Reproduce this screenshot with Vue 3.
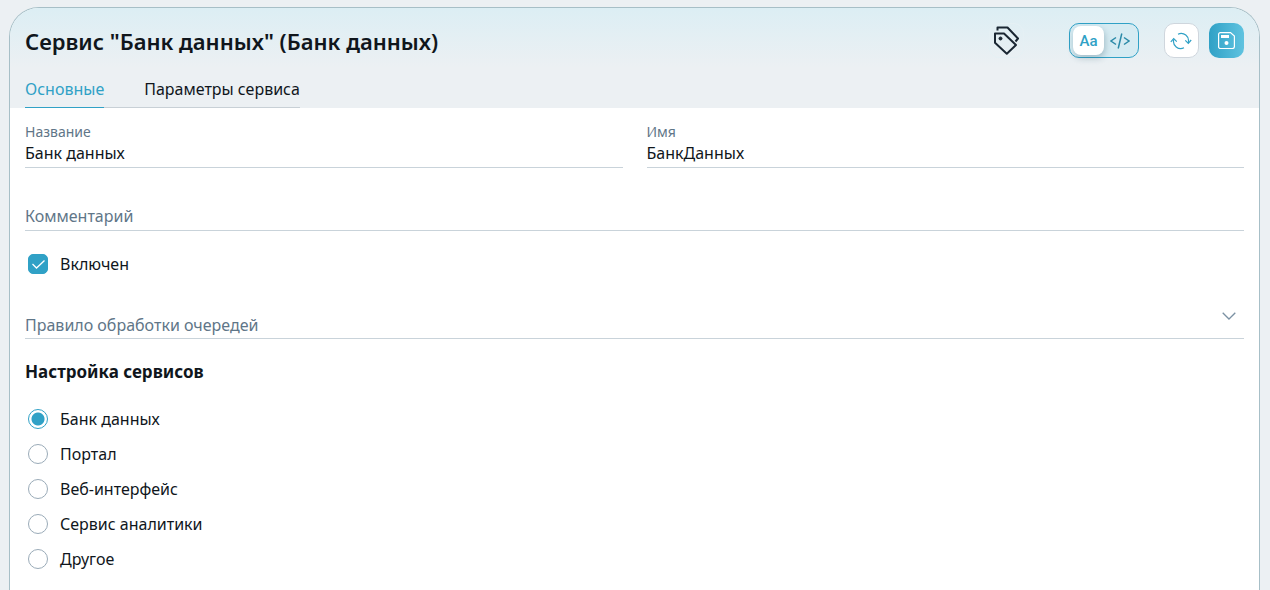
<script setup>
import { ref } from 'vue'

const tabs = ['Основные', 'Параметры сервиса']
const activeTab = ref(tabs[0])
const title = ref('Банк данных')
const name = ref('БанкДанных')
const comment = ref('')
const enabled = ref(true)
const rule = ref('')
const view = ref('text')
const services = ['Банк данных', 'Портал', 'Веб-интерфейс', 'Сервис аналитики', 'Другое']
const service = ref(services[0])
</script>

<template>
  <main class="card">
    <header class="head">
      <div class="bar">
        <h1 class="title">Сервис "Банк данных" (Банк данных)</h1>
        <button class="icon-btn tags" type="button" aria-label="Метки">
          <svg width="35" height="35" viewBox="0 0 35 35" fill="none" stroke="#1b2733" stroke-width="2">
            <path d="M6 10.5h9L27 22 17.800 30.800 6 19.800z" stroke-linejoin="round" />
            <path d="M8.500 7.500V4.500h10L29 15.500 26.500 18.500" stroke-linejoin="round" />
            <circle cx="11.500" cy="15.500" r="1.500" fill="#1b2733" stroke-width="1" />
          </svg>
        </button>
        <div class="switch">
          <button type="button" :class="{ on: view === 'text' }" @click="view = 'text'">Aa</button>
          <button type="button" :class="{ on: view === 'code' }" aria-label="Код" @click="view = 'code'">
            <svg width="20" height="18" viewBox="0 0 20 18" fill="none" stroke="#2b8aa8" stroke-width="1.500">
              <path d="M6 5.500L1 9l5 3.500M14 5.500L19 9l-5 3.500M11.800 1.500L8.200 16.500" />
            </svg>
          </button>
        </div>
        <button class="icon-btn refresh" type="button" aria-label="Обновить">
          <svg width="23" height="18" viewBox="0 0 23 18" fill="none" stroke="#30a1c6" stroke-width="1.200">
            <path d="M8 2.200A7.300 7.300 0 0 1 18.300 10.500M14 15.800A7.300 7.300 0 0 1 3.700 7.500" />
            <path d="M15.300 8.300l3 3 2.900-3.300M.8 9.800l2.900-3.200 3.100 3" />
          </svg>
        </button>
        <button class="icon-btn save" type="button" aria-label="Сохранить">
          <svg width="17" height="17" viewBox="0 0 17 17" fill="none" stroke="#fff" stroke-width="1.200">
            <path d="M2.500 .6h10L16.400 4v10.500a2 2 0 0 1-2 2h-12a1.800 1.800 0 0 1-1.800-2v-12a1.800 1.800 0 0 1 1.900-1.900z" />
            <path d="M3 3h8v3H3z" fill="#fff" stroke="none" />
            <circle cx="8.500" cy="11" r="2" fill="#fff" stroke="none" />
          </svg>
        </button>
      </div>
      <nav class="tabs" role="tablist">
        <button
          v-for="t in tabs"
          :key="t"
          type="button"
          role="tab"
          :aria-selected="t === activeTab"
          :class="{ active: t === activeTab }"
          @click="activeTab = t"
        >{{ t }}</button>
      </nav>
    </header>

    <form class="body" @submit.prevent>
      <div class="pair">
        <div class="field">
          <label for="f-title">Название</label>
          <input id="f-title" v-model="title" type="text" />
        </div>
        <div class="field">
          <label for="f-name">Имя</label>
          <input id="f-name" v-model="name" type="text" />
        </div>
      </div>

      <div class="float comment">
        <label v-show="!comment" for="f-comment">Комментарий</label>
        <input id="f-comment" v-model="comment" type="text" />
      </div>

      <label class="choice">
        <input v-model="enabled" type="checkbox" />
        <svg class="tick" width="20" height="20" viewBox="0 0 20 20" fill="none" stroke="#fff" stroke-width="1.300">
          <path d="M4.500 10l4 4 8-7.500" />
        </svg>
        <span>Включен</span>
      </label>

      <div class="float rule">
        <label v-show="!rule" for="f-rule">Правило обработки очередей</label>
        <select id="f-rule" v-model="rule">
          <option value=""></option>
        </select>
        <svg class="chevron" width="14" height="8" viewBox="0 0 14 8" fill="none" stroke="#7b91a3" stroke-width="1.300">
          <path d="M.7 .7L7 7l6.300-6.300" />
        </svg>
      </div>

      <h2 class="subtitle">Настройка сервисов</h2>
      <div class="radios" role="radiogroup" aria-label="Настройка сервисов">
        <label v-for="s in services" :key="s" class="choice">
          <input v-model="service" type="radio" name="service" :value="s" />
          <span>{{ s }}</span>
        </label>
      </div>
    </form>
  </main>
</template>

<style>
body {
  background: #ecf0f3;
}
</style>

<style scoped>
.card {
  box-sizing: border-box;
  min-height: calc(100vh - 7px);
  margin: 7px 10px 0 9px;
  border: 1px solid #a7bfc7;
  border-bottom: 0;
  border-radius: 30px 30px 0 0;
  background: #fff;
  overflow: hidden;
  color: #10161c;
  font-family: "Noto Sans", "Open Sans", sans-serif;
  font-size: 16px;
  line-height: 24px;
}
button,
input,
select {
  font: inherit;
  color: inherit;
  margin: 0;
  padding: 0;
  border: 0;
  background: none;
}
button {
  cursor: pointer;
}
.head {
  padding: 15px 15px 0;
  background: linear-gradient(#dceef4, #ecf0f3 60%);
}
.bar {
  display: flex;
  align-items: center;
  height: 35px;
}
.title {
  flex: 1;
  margin: 0;
  font-size: 22px;
  line-height: 32px;
  font-weight: 600;
  white-space: nowrap;
}
.icon-btn {
  box-sizing: border-box;
  display: flex;
  align-items: center;
  justify-content: center;
  width: 35px;
  height: 35px;
  border-radius: 10px;
}
.tags {
  border: 1px solid #e5f0f4;
  margin-right: 45px;
}
.tags svg {
  flex: none;
}
.switch {
  box-sizing: border-box;
  display: flex;
  width: 70px;
  height: 35px;
  padding: 2px 3px;
  border: 1px solid #30a1c6;
  border-radius: 10px;
  background: #d6ebf2;
  margin-right: 25px;
}
.switch button {
  flex: 1;
  display: flex;
  align-items: center;
  justify-content: center;
  border-radius: 8px;
  color: #30a1c6;
  font: 500 15px/20px Roboto, sans-serif;
}
.switch .on {
  background: #fff;
  box-shadow: 1px 3px 6px rgba(40, 80, 100, 0.3);
}
.refresh {
  background: #fff;
  border: 1px solid #cfd6dd;
  margin-right: 10px;
}
.save {
  background: linear-gradient(90deg, #30a1c6, #5fc3e0);
}
.tabs {
  display: inline-flex;
  gap: 40px;
  margin-top: 15px;
  border-bottom: 1px solid #c8d0d6;
  vertical-align: top;
}
.tabs button {
  height: 35px;
  margin-bottom: -1px;
  padding-bottom: 2px;
  border-bottom: 1px solid transparent;
}
.tabs .active {
  color: #30a1c6;
  border-bottom-color: #30a1c6;
}
.body {
  padding: 14px 15px 12px;
}
.pair {
  display: grid;
  grid-template-columns: 1fr 1fr;
  gap: 24px;
}
.field {
  display: flex;
  flex-direction: column;
  border-bottom: 1px solid #c9d3da;
}
.field label {
  font-size: 14px;
  line-height: 20px;
  color: #5f7688;
}
.field input {
  height: 25px;
  padding-bottom: 4px;
  box-sizing: border-box;
}
.float {
  display: grid;
  border-bottom: 1px solid #c9d3da;
}
.float > * {
  grid-area: 1 / 1;
}
.float label {
  padding-top: 1px;
  color: #5f7688;
  pointer-events: none;
}
.float input,
.float select {
  min-width: 0;
  height: 27px;
  appearance: none;
}
.comment {
  margin-top: 35px;
}
.rule {
  margin-top: 35px;
}
.rule label {
  padding-top: 2px;
}
.chevron {
  justify-self: end;
  margin: 1px 8px 0 0;
  pointer-events: none;
}
.choice {
  display: grid;
  grid-template-columns: 20px 1fr;
  column-gap: 12px;
  align-items: center;
  width: max-content;
  height: 24px;
  padding-left: 3px;
}
.comment + .choice {
  margin-top: 21px;
}
.choice > input {
  grid-area: 1 / 1;
  box-sizing: border-box;
  width: 20px;
  height: 20px;
  appearance: none;
}
.choice > span {
  grid-area: 1 / 2;
}
.choice input[type="checkbox"] {
  border: 1px solid #9aabb8;
  border-radius: 5px;
}
.choice input[type="checkbox"]:checked {
  border-color: #30a1c6;
  background: #30a1c6;
}
.tick {
  grid-area: 1 / 1;
  pointer-events: none;
}
.choice input[type="radio"] {
  border: 1px solid #9aabb8;
  border-radius: 50%;
}
.choice input[type="radio"]:checked {
  border-color: #30a1c6;
  background: radial-gradient(circle, #30a1c6 6px, transparent 7px);
}
.subtitle {
  margin: 19px 0 0;
  font-size: 17px;
  line-height: 28px;
  font-weight: 700;
}
.radios {
  display: grid;
  gap: 11px;
  margin-top: 21px;
}
</style>
